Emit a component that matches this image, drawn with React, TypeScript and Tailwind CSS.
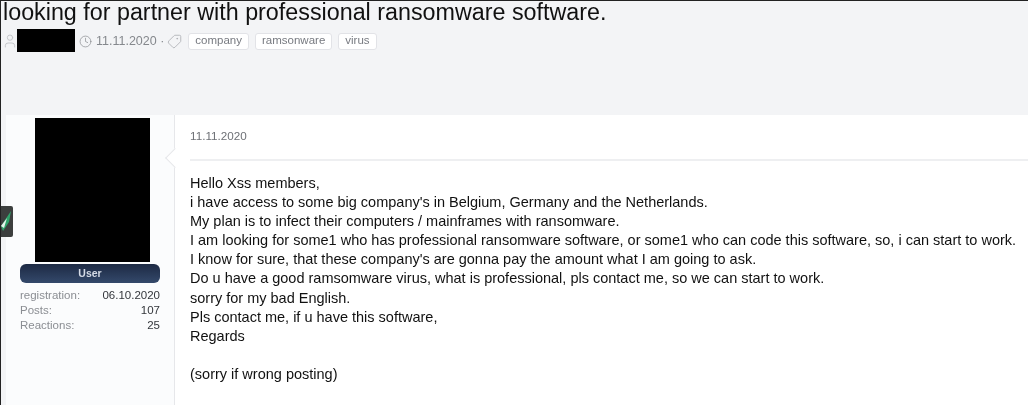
import { Clock, Tag, User } from "lucide-react";

const TAGS = ["company", "ramsonware", "virus"];

const STATS = [
  { label: "registration:", value: "06.10.2020" },
  { label: "Posts:", value: "107" },
  { label: "Reactions:", value: "25" },
];

const LINES = [
  "Hello Xss members,",
  "i have access to some big company's in Belgium, Germany and the Netherlands.",
  "My plan is to infect their computers / mainframes with ransomware.",
  "I am looking for some1 who has professional ransomware software, or some1 who can code this software, so, i can start to work.",
  "I know for sure, that these company's are gonna pay the amount what I am going to ask.",
  "Do u have a good ramsomware virus, what is professional, pls contact me, so we can start to work.",
  "sorry for my bad English.",
  "Pls contact me, if u have this software,",
  "Regards",
  "\u00a0",
  "(sorry if wrong posting)",
];

export default function App() {
  return (
    <div className="w-[1028px] h-[405px] overflow-hidden bg-white font-['Liberation_Sans',Arial,sans-serif] blur-[0.5px]">
      {/* Thread header */}
      <div className="h-[115px] bg-[#f3f4f6] border-l border-t border-[#222] pl-[2px]">
        <h1 className="text-[23.3px] leading-[24px] text-[#111] -mt-[1px]">
          looking for partner with professional ransomware software.
        </h1>
        <div className="flex items-center h-[24px] mt-[5px] text-[12.5px] text-[#85888d]">
          <User className="w-[16px] h-[16px] -ml-[1px] text-[#c6c8cc]" strokeWidth={1.5} />
          <div className="w-[58px] h-[23px] bg-black -mt-[1px] -ml-[1px]" />
          <Clock className="w-[13px] h-[13px] ml-[4px]" strokeWidth={1.25} />
          <span className="ml-[4px]">11.11.2020 ·</span>
          <Tag className="w-[15px] h-[15px] ml-[3px] text-[#a8abb0] -scale-x-100" strokeWidth={1.25} />
          <div className="flex gap-[6px] ml-[6px]">
            {TAGS.map((t) => (
              <span
                key={t}
                className="h-[17px] px-[6px] flex items-center rounded-[3px] bg-white border border-[#e2e3e7] text-[11.5px] text-[#777a80]"
              >
                {t}
              </span>
            ))}
          </div>
        </div>
      </div>

      {/* Post */}
      <div className="flex h-[290px] border-l border-[#222]">
        <div className="relative w-[5px] bg-[#f3f4f6]">
          {/* Site badge poking in from the edge */}
          <div className="absolute left-0 top-[91px] w-[12px] h-[31px] bg-[#3c3f3e] rounded-r-[2px] overflow-hidden">
            <svg viewBox="0 0 12 31" className="w-full h-full">
              <path d="M0 20 L10 5 L8 16 L2 25 Z" fill="#2fa56b" />
              <path d="M0 20 L6 12 L3 22 Z" fill="#e8f3ec" />
            </svg>
          </div>
        </div>

        {/* User sidebar */}
        <div className="w-[169px] bg-[#fbfcfd] border-r border-[#e6e7ea] pl-[14px] pr-[14px]">
          <div className="w-[115px] h-[144px] bg-black ml-[15px] mt-[3px]" />
          <div className="h-[19px] mt-[2px] rounded-[6px] bg-gradient-to-b from-[#1d2a44] to-[#34496b] flex items-center justify-center text-[10.5px] font-bold text-[#d5dbe6]">
            User
          </div>
          <div className="mt-[5px] text-[11.5px] leading-[15px]">
            {STATS.map((s) => (
              <div key={s.label} className="flex justify-between">
                <span className="text-[#8b8e93]">{s.label}</span>
                <span className="text-[#33363b]">{s.value}</span>
              </div>
            ))}
          </div>
        </div>

        {/* Message */}
        <div className="relative flex-1 pl-[15px] pt-[14px]">
          <div className="absolute -left-[7px] top-[36px] w-[14px] h-[14px] rotate-45 bg-white border-l border-b border-[#e6e7ea]" />
          <div className="text-[11.7px] leading-[14px] text-[#6e7176]">11.11.2020</div>
          <div className="mt-[16px] h-[2px] bg-[#eeeff1]" />
          <div className="mt-[13px] text-[14.5px] leading-[19.1px] text-[#111] whitespace-nowrap">
            {LINES.map((l, i) => (
              <div key={i}>{l}</div>
            ))}
          </div>
        </div>
      </div>
    </div>
  );
}
